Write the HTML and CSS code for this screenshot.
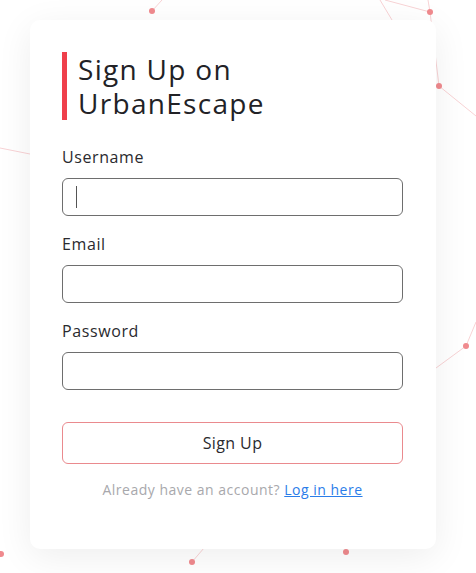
FILE: index.html
```html
<!DOCTYPE html>
<html lang="en">
<head>
<meta charset="utf-8">
<title>Sign Up on UrbanEscape</title>
<link rel="stylesheet" href="styles.css">
</head>
<body>
<svg class="network" width="476" height="573" viewBox="0 0 476 573" aria-hidden="true">
  <g class="links">
    <line x1="152" y1="11" x2="162" y2="0"/>
    <line x1="430" y1="12" x2="385" y2="0"/>
    <line x1="430" y1="12" x2="428" y2="0"/>
    <line x1="380" y1="0" x2="392" y2="20"/>
    <line x1="430" y1="12" x2="439" y2="86"/>
    <line x1="439" y1="86" x2="476" y2="116"/>
    <line x1="466" y1="346" x2="476" y2="322"/>
    <line x1="466" y1="346" x2="436" y2="368"/>
    <line x1="0" y1="148" x2="30" y2="154"/>
    <line x1="192" y1="562" x2="204" y2="548"/>
  </g>
  <g class="nodes">
    <circle cx="152" cy="11" r="3"/>
    <circle cx="430" cy="12" r="3"/>
    <circle cx="439" cy="86" r="3"/>
    <circle cx="466" cy="346" r="3"/>
    <circle cx="1" cy="554" r="3"/>
    <circle cx="192" cy="562" r="3"/>
    <circle cx="346" cy="552" r="3"/>
  </g>
</svg>
<main class="card">
  <h1 class="title">Sign Up on UrbanEscape</h1>
  <form class="form">
    <label class="field">
      <span class="label">Username</span>
      <span class="input-wrap focused"><input class="input" type="text" name="username"></span>
    </label>
    <label class="field">
      <span class="label">Email</span>
      <span class="input-wrap"><input class="input" type="email" name="email"></span>
    </label>
    <label class="field">
      <span class="label">Password</span>
      <span class="input-wrap"><input class="input" type="password" name="password"></span>
    </label>
    <button class="submit" type="button">Sign Up</button>
  </form>
  <p class="footer">Already have an account? <a class="link" href="#">Log in here</a></p>
</main>
</body>
</html>
```

FILE: styles.css
```css
* { box-sizing: border-box; }

html, body {
  margin: 0;
  padding: 0;
  background: #ffffff;
}

body {
  position: relative;
  width: 476px;
  height: 573px;
  overflow: hidden;
  font-family: "Open Sans", "Liberation Sans", sans-serif;
  color: #2a2a2e;
  padding: 20px 40px 0 30px;
}

.network {
  position: absolute;
  left: 0;
  top: 0;
  z-index: 0;
}

.links line {
  stroke: #f8d3d5;
  stroke-width: 1;
}

.nodes circle {
  fill: #f08a8e;
}

.card {
  position: relative;
  z-index: 1;
  width: 406px;
  height: 529px;
  background: #ffffff;
  border-radius: 10px;
  box-shadow: 0 8px 36px rgba(0, 0, 0, 0.07);
  padding: 32px 33px 0 32px;
}

.title {
  margin: 0;
  border-left: 5px solid #ef3f4b;
  padding-left: 11px;
  font-size: 28px;
  line-height: 34px;
  font-weight: 400;
  letter-spacing: 1.3px;
  color: #222226;
  width: 250px;
}

.form {
  display: flex;
  flex-direction: column;
  margin-top: 25px;
}

.field {
  display: flex;
  flex-direction: column;
  gap: 9px;
  margin-bottom: 16px;
}

.label {
  font-size: 16px;
  line-height: 24px;
  letter-spacing: 0.6px;
  color: #2a2a2e;
}

.input-wrap {
  position: relative;
  display: block;
}

.input {
  display: block;
  width: 100%;
  height: 38px;
  border: 1px solid #6e6e6e;
  border-radius: 6px;
  background: #ffffff;
  padding: 0 14px;
  font: inherit;
  outline: none;
}

.focused::after {
  content: "";
  position: absolute;
  left: 14px;
  top: 8px;
  width: 1px;
  height: 22px;
  background: #555555;
}

.submit {
  margin-top: 16px;
  height: 42px;
  border: 1px solid #ea8a8e;
  border-radius: 6px;
  background: #ffffff;
  font-family: inherit;
  font-size: 16px;
  letter-spacing: 0.4px;
  color: #2a2a2e;
  cursor: pointer;
}

.footer {
  margin: 16px 0 0;
  text-align: center;
  font-size: 14px;
  line-height: 20px;
  letter-spacing: 0.5px;
  color: #a8a8ac;
}

.link {
  color: #2b7de9;
  text-decoration: underline;
}
```
